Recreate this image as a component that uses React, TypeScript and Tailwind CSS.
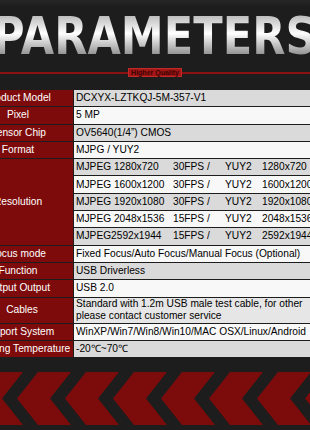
import React from 'react'

const font = { fontFamily: '"Liberation Sans", Arial, sans-serif' }

type Row = { label: string; value: string; bg: string }

const topRows: Row[] = [
  { label: 'Product Model', value: 'DCXYX-LZTKQJ-5M-357-V1', bg: 'bg-[#dadada]' },
  { label: 'Pixel', value: '5 MP', bg: 'bg-[#f8f8f8]' },
  { label: 'Sensor Chip', value: 'OV5640(1/4”) CMOS', bg: 'bg-[#dadada]' },
  { label: 'Format', value: 'MJPG / YUY2', bg: 'bg-[#f8f8f8]' },
]

const resolutions = [
  ['MJPEG 1280x720', '30FPS /', 'YUY2', '1280x720'],
  ['MJPEG 1600x1200', '30FPS /', 'YUY2', '1600x1200'],
  ['MJPEG 1920x1080', '30FPS /', 'YUY2', '1920x1080'],
  ['MJPEG 2048x1536', '15FPS /', 'YUY2', '2048x1536'],
  ['MJPEG2592x1944', '15FPS /', 'YUY2', '2592x1944'],
]

const midRows: Row[] = [
  { label: 'Focus mode', value: 'Fixed Focus/Auto Focus/Manual Focus (Optional)', bg: 'bg-[#f8f8f8]' },
  { label: 'Function', value: 'USB Driverless', bg: 'bg-[#dadada]' },
  { label: 'Output Output', value: 'USB 2.0', bg: 'bg-[#f8f8f8]' },
]

const bottomRows: Row[] = [
  { label: 'Support System', value: 'WinXP/Win7/Win8/Win10/MAC OSX/Linux/Android', bg: 'bg-[#f8f8f8]' },
  { label: 'Operating Temperature', value: '-20℃~70℃', bg: 'bg-[#dadada]' },
]

function Label({ children }: { children: React.ReactNode }) {
  return (
    <div className="w-[110px] shrink-0 bg-[#7e0b0b] text-white flex items-center justify-center whitespace-nowrap">
      {children}
    </div>
  )
}

function SimpleRow({ row }: { row: Row }) {
  return (
    <div className="flex gap-px h-[16.3px]">
      <Label>{row.label}</Label>
      <div className={`flex-1 ${row.bg} text-black flex items-center pl-[2px] whitespace-nowrap`}>{row.value}</div>
    </div>
  )
}

function Chevrons() {
  const tips = [-46, 2, 50, 98, 146, 194, 242, 290]
  return (
    <svg width="310" height="53" viewBox="0 0 310 53" className="block">
      <rect width="310" height="53" fill="#7c0b0b" />
      {tips.map((t) => (
        <polygon
          key={t}
          points={`${t + 21},0 ${t + 36},0 ${t + 15},26.5 ${t + 36},53 ${t + 21},53 ${t},26.5`}
          fill="#1d1d1d"
        />
      ))}
    </svg>
  )
}

export default function App() {
  return (
    <div className="w-[310px] h-[430px] overflow-hidden bg-[#1d1d1d]" style={font}>
      {/* Header */}
      <div className="h-[90px] relative bg-gradient-to-b from-[#262626] to-[#1d1d1d] to-[8%]">
        <div className="flex justify-center pt-[10px]">
          <div
            className="shrink-0 whitespace-nowrap font-bold text-[52px] leading-none scale-x-[0.83] bg-gradient-to-b from-[#a8a8a8] via-[#ffffff] via-45% to-[#6f6f6f] bg-clip-text text-transparent"
            style={{ fontFamily: '"DejaVu Sans", sans-serif' }}
          >
            PARAMETERS
          </div>
        </div>
        <div className="relative mt-[5px] h-[10px] flex items-center justify-center">
          <div className="absolute left-0 right-0 top-[5px] h-[2px] bg-[#8c1212]" />
          <div className="relative h-[9px] px-[2px] bg-[#a31616] border border-[#c02a2a] flex items-center text-[7px] font-bold text-[#3a0404] leading-none">
            Higher Quality
          </div>
        </div>
      </div>

      {/* Table */}
      <div className="overflow-hidden">
        <div className="ml-[-37px] flex flex-col gap-px text-[10.2px] leading-none">
          {topRows.map((r) => (
            <SimpleRow key={r.label} row={r} />
          ))}
          <div className="flex gap-px">
            <Label>Resolution</Label>
            <div className="flex-1 flex flex-col gap-px">
              {resolutions.map((r, i) => (
                <div
                  key={r[0]}
                  className={`h-[16.3px] flex items-center pl-[2px] whitespace-nowrap text-black ${i % 2 === 0 ? 'bg-[#dadada]' : 'bg-[#f8f8f8]'}`}
                >
                  <span className="w-[97px] shrink-0">{r[0]}</span>
                  <span className="w-[52px] shrink-0">{r[1]}</span>
                  <span className="w-[37px] shrink-0">{r[2]}</span>
                  <span>{r[3]}</span>
                </div>
              ))}
            </div>
          </div>
          {midRows.map((r) => (
            <SimpleRow key={r.label} row={r} />
          ))}
          <div className="flex gap-px h-[25px]">
            <Label>
              <span className="pl-[8px]">Cables</span>
            </Label>
            <div className="flex-1 bg-[#e6e6e6] text-black flex flex-col justify-center pl-[2px] leading-[12px] whitespace-nowrap">
              <span>Standard with 1.2m USB male test cable, for other</span>
              <span>please contact customer service</span>
            </div>
          </div>
          {bottomRows.map((r) => (
            <SimpleRow key={r.label} row={r} />
          ))}
        </div>
      </div>

      {/* Chevron band */}
      <div className="mt-[15px]">
        <Chevrons />
      </div>
    </div>
  )
}
